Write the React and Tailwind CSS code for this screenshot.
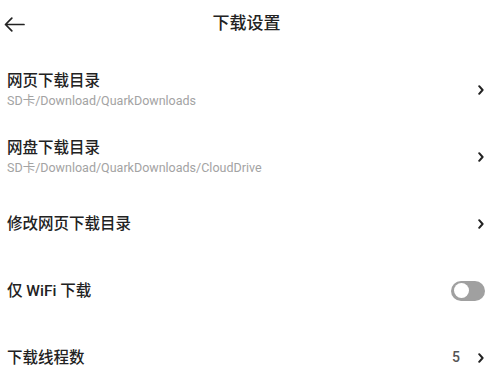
export default function App() {
  const rows = [
    { title: '网页下载目录', sub: 'SD卡/Download/QuarkDownloads', type: 'chevron' },
    { title: '网盘下载目录', sub: 'SD卡/Download/QuarkDownloads/CloudDrive', type: 'chevron' },
    { title: '修改网页下载目录', type: 'chevron' },
    { title: '仅 WiFi 下载', type: 'toggle' },
    { title: '下载线程数', type: 'value', value: '5' },
  ];

  const Chevron = () => (
    <svg width="6" height="10" viewBox="0 0 6 10" fill="none">
      <path d="M1.2 1.2 L4.6 5 L1.2 8.8" stroke="#222" strokeWidth="2" strokeLinecap="round" strokeLinejoin="round" />
    </svg>
  );

  return (
    <div
      className="w-[487px] h-[385px] bg-white overflow-hidden text-[#222]"
      style={{ fontFamily: "Roboto, 'Noto Sans CJK SC', sans-serif" }}
    >
      {/* header */}
      <div className="relative h-12 flex items-center justify-center">
        <button className="absolute left-[4px] top-[17px]">
          <svg width="21" height="15" viewBox="0 0 21 15" fill="none">
            <path d="M20 7.5H1.5 M7.8 1.2 L1.5 7.5 L7.8 13.8" stroke="#222" strokeWidth="1.7" strokeLinecap="round" strokeLinejoin="round" />
          </svg>
        </button>
        <h1 className="text-[17px] font-medium text-[#222] ml-[6px]">下载设置</h1>
      </div>

      <div className="pt-2">
        {rows.map((r) => (
          <div key={r.title} className="h-[67px] flex items-center pl-[7px] pr-[3px]">
            <div className="flex-1 min-w-0">
              <div className="text-[15.5px] font-medium leading-[20px] text-[#222]">{r.title}</div>
              {r.sub && (
                <div className="text-[12.5px] leading-[16px] text-[#a3a3a3] mt-[2px]">{r.sub}</div>
              )}
            </div>
            {r.type === 'chevron' && <Chevron />}
            {r.type === 'value' && (
              <div className="flex items-center gap-[18px]">
                <span className="text-[14px] font-medium text-[#555]">{r.value}</span>
                <Chevron />
              </div>
            )}
            {r.type === 'toggle' && (
              <div className="w-[34px] h-[20px] rounded-full bg-[#a0a0a0] flex items-center pl-[3px] -mr-[1px]">
                <div className="w-[15px] h-[15px] rounded-full bg-white" />
              </div>
            )}
          </div>
        ))}
      </div>
    </div>
  );
}
